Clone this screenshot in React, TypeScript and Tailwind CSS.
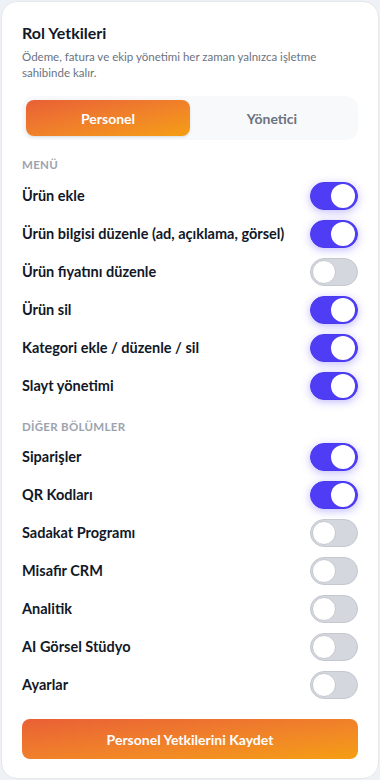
import { useState } from "react";

type Item = { label: string; on: boolean };

const menuItems: Item[] = [
	{ label: "Ürün ekle", on: true },
	{ label: "Ürün bilgisi düzenle (ad, açıklama, görsel)", on: true },
	{ label: "Ürün fiyatını düzenle", on: false },
	{ label: "Ürün sil", on: true },
	{ label: "Kategori ekle / düzenle / sil", on: true },
	{ label: "Slayt yönetimi", on: true },
];

const otherItems: Item[] = [
	{ label: "Siparişler", on: true },
	{ label: "QR Kodları", on: true },
	{ label: "Sadakat Programı", on: false },
	{ label: "Misafir CRM", on: false },
	{ label: "Analitik", on: false },
	{ label: "AI Görsel Stüdyo", on: false },
	{ label: "Ayarlar", on: false },
];

function Toggle({ on }: { on: boolean }) {
	return on ? (
		<div className="flex h-7 w-12 shrink-0 items-center justify-end rounded-full border border-[#4b3bf0] bg-[#4f3df5] pr-[2px] shadow-[0_2px_8px_rgba(79,61,245,0.35)]">
			<div className="h-6 w-6 rounded-full bg-white" />
		</div>
	) : (
		<div className="flex h-7 w-12 shrink-0 items-center rounded-full border border-[#c4c8cf] bg-[#d4d7dd] pl-[1px]">
			<div className="h-6 w-6 rounded-full border border-[#c4c8cf] bg-white" />
		</div>
	);
}

function Row({ item }: { item: Item }) {
	return (
		<div className="flex h-[38px] items-center justify-between">
			<span className="text-[14.5px] leading-5 font-bold text-[#111827]">{item.label}</span>
			<Toggle on={item.on} />
		</div>
	);
}

export default function App() {
	const [tab, setTab] = useState("personel");
	return (
		<div className="min-h-[780px] bg-[#eef1f6] p-px font-['Lato',sans-serif]">
			<div className="rounded-2xl border border-[#e5e7eb] bg-white px-5 pt-[21px] pb-[19px]">
				<h2 className="text-[16px] leading-5 font-bold text-[#111827]">Rol Yetkileri</h2>
				<p className="mt-[6px] text-[11.5px] leading-4 text-[#6b7280]">
					Ödeme, fatura ve ekip yönetimi her zaman yalnızca işletme sahibinde kalır.
				</p>
				<div className="mt-[15px] flex rounded-xl bg-[#f8f9fb] p-1">
					<button
						onClick={() => setTab("personel")}
						className={
							tab === "personel"
								? "h-9 flex-1 rounded-lg bg-gradient-to-br from-[#e95f35] to-[#f59e10] text-[14px] font-bold text-white shadow-sm"
								: "h-9 flex-1 rounded-lg text-[14px] font-bold text-[#6b7280]"
						}
					>
						Personel
					</button>
					<button
						onClick={() => setTab("yonetici")}
						className={
							tab === "yonetici"
								? "h-9 flex-1 rounded-lg bg-gradient-to-br from-[#e95f35] to-[#f59e10] text-[14px] font-bold text-white shadow-sm"
								: "h-9 flex-1 rounded-lg text-[14px] font-bold text-[#6b7280]"
						}
					>
						Yönetici
					</button>
				</div>

				<div className="mt-[17px] text-[11.5px] leading-4 font-bold tracking-wide text-[#9ca3af]">MENÜ</div>
				<div className="mt-[4px]">
					{menuItems.map((it) => (
						<Row key={it.label} item={it} />
					))}
				</div>

				<div className="mt-[14px] text-[11.5px] leading-4 font-bold tracking-wide text-[#9ca3af]">DİĞER BÖLÜMLER</div>
				<div className="mt-[3px]">
					{otherItems.map((it) => (
						<Row key={it.label} item={it} />
					))}
				</div>

				<button className="mt-[15px] h-[40px] w-full rounded-lg bg-gradient-to-br from-[#e95f35] to-[#f59e10] text-[14px] font-bold text-white">
					Personel Yetkilerini Kaydet
				</button>
			</div>
		</div>
	);
}
